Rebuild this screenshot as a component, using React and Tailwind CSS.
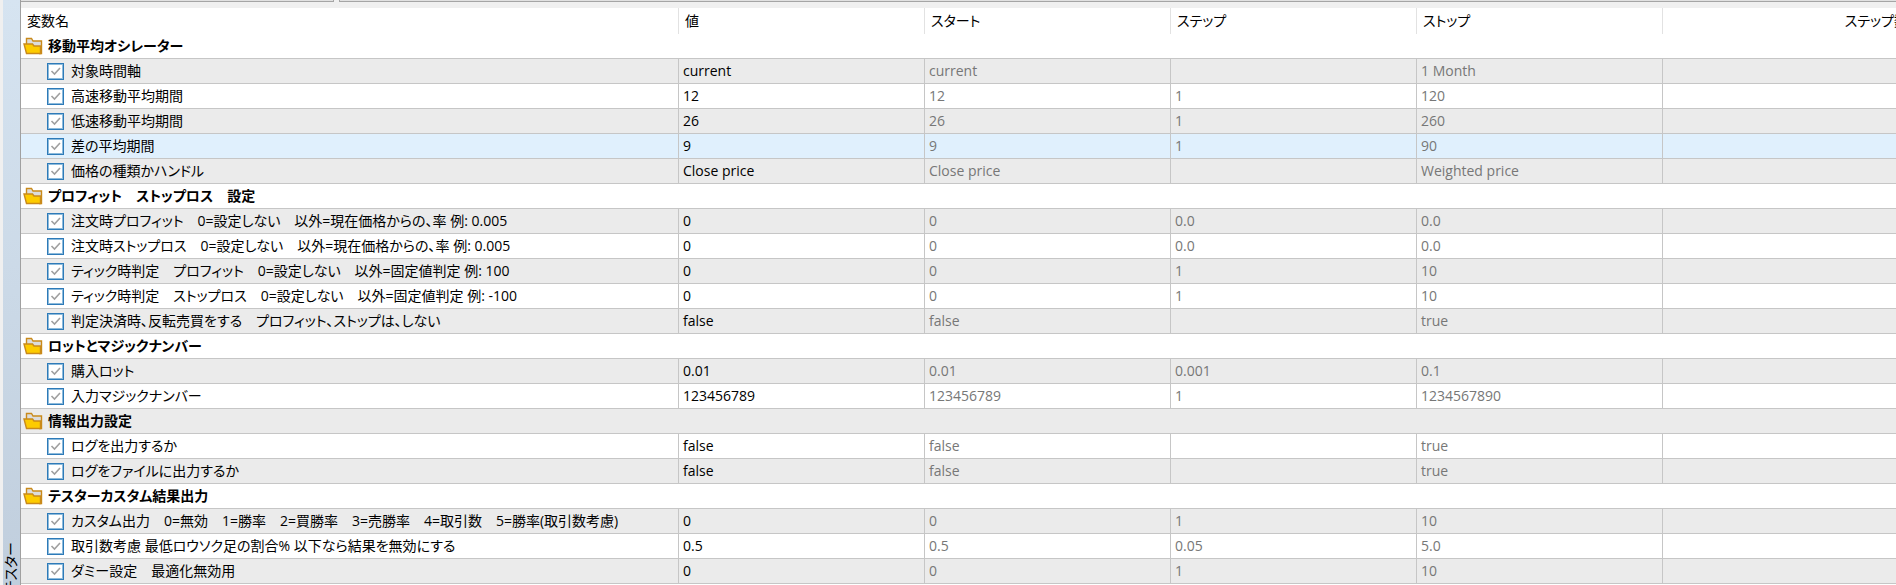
import React from 'react';

const columns = ['変数名', '値', 'スタート', 'ステップ', 'ストップ', 'ステップ数'];

const groups = [
  {
    name: '移動平均オシレーター',
    params: [
      ['対象時間軸', 'current', 'current', '', '1 Month'],
      ['高速移動平均期間', '12', '12', '1', '120'],
      ['低速移動平均期間', '26', '26', '1', '260'],
      ['差の平均期間', '9', '9', '1', '90'],
      ['価格の種類かハンドル', 'Close price', 'Close price', '', 'Weighted price'],
    ],
  },
  {
    name: 'プロフィット　ストップロス　設定',
    params: [
      ['注文時プロフィット　0=設定しない　以外=現在価格からの、率 例: 0.005', '0', '0', '0.0', '0.0'],
      ['注文時ストップロス　0=設定しない　以外=現在価格からの、率 例: 0.005', '0', '0', '0.0', '0.0'],
      ['ティック時判定　プロフィット　0=設定しない　以外=固定値判定 例: 100', '0', '0', '1', '10'],
      ['ティック時判定　ストップロス　0=設定しない　以外=固定値判定 例: -100', '0', '0', '1', '10'],
      ['判定決済時、反転売買をする　プロフィット、ストップは、しない', 'false', 'false', '', 'true'],
    ],
  },
  {
    name: 'ロットとマジックナンバー',
    params: [
      ['購入ロット', '0.01', '0.01', '0.001', '0.1'],
      ['入力マジックナンバー', '123456789', '123456789', '1', '1234567890'],
    ],
  },
  {
    name: '情報出力設定',
    params: [
      ['ログを出力するか', 'false', 'false', '', 'true'],
      ['ログをファイルに出力するか', 'false', 'false', '', 'true'],
    ],
  },
  {
    name: 'テスターカスタム結果出力',
    params: [
      ['カスタム出力　0=無効　1=勝率　2=買勝率　3=売勝率　4=取引数　5=勝率(取引数考慮)', '0', '0', '1', '10'],
      ['取引数考慮 最低ロウソク足の割合% 以下なら結果を無効にする', '0.5', '0.5', '0.05', '5.0'],
      ['ダミー設定　最適化無効用', '0', '0', '1', '10'],
    ],
  },
];

const selected = '差の平均期間';

// one flat list, so the stripes run on across the groups
const rows = groups.flatMap((group) => [
  { title: group.name },
  ...group.params.map(([name, ...values]) => ({ name, values })),
]);

const FolderIcon = () => (
  <svg className="size-5 shrink-0" viewBox="0 0 20 20" aria-hidden="true">
    <path d="M3.5 8V2.5h5l1.5 2.5h8.5v12.5H16" fill="#dcdcdc" stroke="#c98a1b" strokeWidth="1.4" />
    <path d="M1 8h8.5l1.5 2h6.5v7.5H3.5z" fill="#fdcb00" stroke="#c98a1b" strokeWidth="1.4" />
  </svg>
);

const Checkbox = ({ id }) => (
  <span className="grid size-[17px] shrink-0">
    <input
      id={id}
      type="checkbox"
      defaultChecked
      className="peer col-start-1 row-start-1 size-[17px] appearance-none border border-[#2d7ab8] bg-white inset-ring inset-ring-[#8dbbdc]"
    />
    <svg
      className="pointer-events-none invisible col-start-1 row-start-1 size-[17px] peer-checked:visible"
      viewBox="0 0 17 17"
      fill="none"
      stroke="#a0a0a0"
      strokeWidth="1.6"
      aria-hidden="true"
    >
      <path d="M4.5 8l3 3 5.5-6" />
    </svg>
  </span>
);

const GroupRow = ({ title, shade }) => (
  <tr className={shade}>
    <th colSpan={6} scope="rowgroup" className="border-b border-[#c6c6c6] p-0 text-left font-bold">
      <div className="flex items-center gap-[5px] pl-[2px] text-[14px] leading-6">
        <FolderIcon />
        {title}
      </div>
    </th>
  </tr>
);

const ParamRow = ({ id, name, values, shade }) => (
  <tr className={shade}>
    <td className="border-r border-b border-[#c6c6c6] p-0">
      <div className="flex items-center gap-[7px] pl-[26px] text-[14px] leading-6">
        <Checkbox id={id} />
        <label htmlFor={id} className="whitespace-nowrap">{name}</label>
      </div>
    </td>
    {values.map((value, i) => (
      <td
        key={i}
        className={`border-r border-b border-[#c6c6c6] py-0 pr-0 pl-1 text-[14px] leading-6 ${i === 0 ? 'text-black' : 'text-[#777777]'}`}
      >
        {value}
      </td>
    ))}
    <td className="border-b border-[#c6c6c6] p-0"></td>
  </tr>
);

const App = () => {
  return (
    <div className="flex h-screen overflow-hidden bg-[#f0f0f0] pl-[3px] font-['Open_Sans','Noto_Sans_CJK_JP',sans-serif] text-black">
      <aside className="flex w-[17px] shrink-0 flex-col justify-end bg-linear-to-b from-[#d6e4f1] to-[#c0cedd]">
        <span className="-mb-2 text-[14px] leading-4 [writing-mode:sideways-lr] [font-feature-settings:'palt']">テスター</span>
      </aside>

      <main className="min-w-0 flex-1 overflow-hidden border-l border-[#a0a0a0] bg-white">
        <div className="flex h-2 items-start gap-[5px] bg-[#f0f0f0]">
          <div className="h-[2px] w-[313px] border-r border-b border-[#a5a5a5] bg-[#e1e1e1]"></div>
          <div className="h-[2px] flex-1 border-b border-l border-[#a5a5a5] bg-[#e1e1e1]"></div>
        </div>

        {/* the last column runs past the right edge of the panel */}
        <table className="w-[calc(100%+13px)] table-fixed border-separate border-spacing-0 bg-white [font-feature-settings:'palt']">
          <colgroup>
            <col />
            <col className="w-[246px]" />
            <col className="w-[246px]" />
            <col className="w-[246px]" />
            <col className="w-[246px]" />
            <col className="w-[246px]" />
          </colgroup>
          <thead>
            <tr className="h-[26px]">
              {columns.map((column, i) => (
                <th
                  key={column}
                  scope="col"
                  className={`border-r border-[#e2e2e2] py-0 pr-0 pl-[6px] text-[14px] leading-6 font-normal ${i === 5 ? 'text-right' : 'text-left'}`}
                >
                  {column}
                </th>
              ))}
            </tr>
          </thead>
          <tbody>
            {rows.map((row, i) => {
              const shade = row.name === selected ? 'bg-[#e0f0fd]' : i % 2 ? 'bg-[#ebebeb]' : 'bg-white';
              return row.title ? (
                <GroupRow key={i} title={row.title} shade={shade} />
              ) : (
                <ParamRow key={i} id={`param-${i}`} name={row.name} values={row.values} shade={shade} />
              );
            })}
          </tbody>
        </table>
      </main>
    </div>
  );
};

export default App;
